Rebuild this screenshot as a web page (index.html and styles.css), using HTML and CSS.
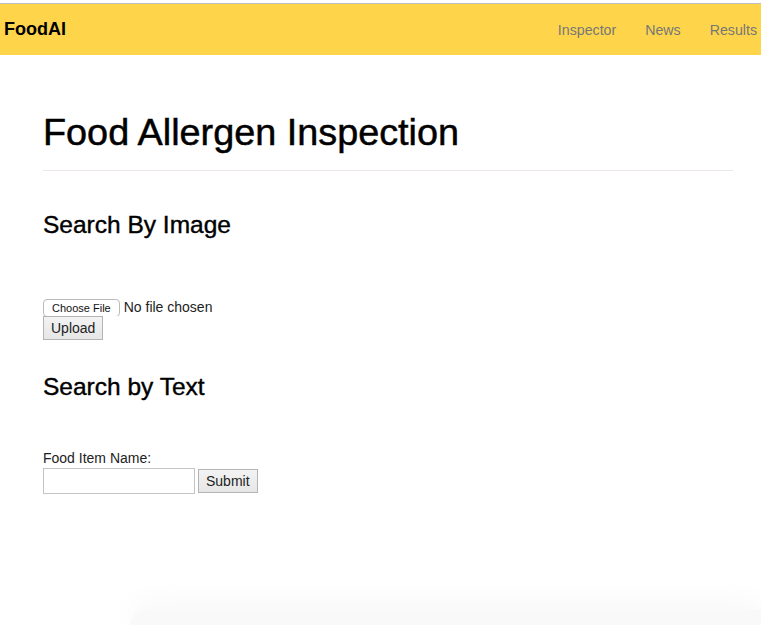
FILE: index.html
```html
<!DOCTYPE html>
<html>
<head>
<meta charset="utf-8">
<link rel="stylesheet" href="styles.css">
</head>
<body>
<div class="topline"></div>
<nav class="navbar">
  <a class="brand" href="#">FoodAI</a>
  <ul class="nav-links">
    <li><a href="#">Inspector</a></li>
    <li><a href="#">News</a></li>
    <li><a href="#">Results</a></li>
  </ul>
</nav>
<main class="container">
  <h1 class="page-title">Food Allergen Inspection</h1>
  <hr class="divider">
  <h3 class="section-title">Search By Image</h3>
  <form class="image-form">
    <input type="file" class="file-input">
    <button type="button" class="btn">Upload</button>
  </form>
  <h3 class="section-title text-title">Search by Text</h3>
  <form class="text-form">
    <label class="field-label">Food Item Name:</label>
    <div class="field-row">
      <input type="text" class="text-input">
      <button type="button" class="btn">Submit</button>
    </div>
  </form>
</main>
<div class="bottom-shadow"></div>
</body>
</html>
```
FILE: styles.css
```css
html, body {
  margin: 0;
  padding: 0;
  background: #fff;
  font-family: "Liberation Sans", Arial, sans-serif;
  color: #000;
  overflow: hidden;
  height: 625px;
}
body { position: relative; }
.topline {
  height: 3px;
  border-bottom: 1px solid #bdbdbd;
  background: #fff;
}
.navbar {
  height: 51px;
  background: #fed54a;
  display: flex;
  align-items: center;
  justify-content: space-between;
  padding-left: 4px;
}
.brand {
  font-weight: bold;
  font-size: 18px;
  color: #000;
  text-decoration: none;
}
.nav-links {
  list-style: none;
  margin: 0;
  padding: 0 4px 0 0;
  display: flex;
  gap: 29px;
}
.nav-links a {
  display: block;
  color: #777;
  text-decoration: none;
  font-size: 14.2px;
}
.container {
  padding: 0 28px 0 43px;
}
.page-title {
  font-size: 37.8px;
  font-weight: normal;
  -webkit-text-stroke: 0.5px #000;
  margin: 55px 0 0 0;
  line-height: 44px;
}
.divider {
  border: 0;
  border-top: 1px solid #eee8ec;
  margin: 16px 0 0 0;
}
.section-title {
  font-size: 24.5px;
  font-weight: normal;
  -webkit-text-stroke: 0.4px #000;
  margin: 39px 0 0 0;
  line-height: 30px;
}
.image-form {
  margin-top: 58px;
  display: flex;
  flex-direction: column;
  align-items: flex-start;
}
.file-input {
  font-family: "Liberation Sans", Arial, sans-serif;
  font-size: 14px;
  color: #222;
  height: 18px;
  line-height: 18px;
}
.file-input::file-selector-button {
  font-family: "Liberation Sans", Arial, sans-serif;
  font-size: 11px;
  color: #111;
  background: #fff;
  border: 1px solid #bbb;
  border-radius: 4px;
  padding: 1px 8px;
  height: 18px;
  margin-right: 4px;
}
.btn {
  font-family: "Liberation Sans", Arial, sans-serif;
  font-size: 14px;
  color: #222;
  background: linear-gradient(#f3f3f3, #e6e6e6);
  border: 1px solid #b4b4b4;
  border-radius: 0;
  padding: 2px 7px;
  height: 24px;
}
.text-title { margin-top: 32px; }
.text-form {
  margin-top: 48px;
}
.field-label {
  display: block;
  font-size: 14px;
  color: #222;
  line-height: 16px;
}
.field-row {
  display: flex;
  align-items: center;
  gap: 3px;
  margin-top: 2px;
}
.text-input {
  box-sizing: border-box;
  width: 152px;
  height: 26px;
  border: 1px solid #c4c4c4;
  padding: 0 2px;
  margin: 0;
}
.bottom-shadow {
  position: absolute;
  left: 130px;
  right: 0;
  top: 610px;
  height: 15px;
  border-radius: 40px 0 0 0;
  box-shadow: 0 -4px 30px rgba(0,0,0,0.06);
  background: rgba(0,0,0,0.025);
}
```
